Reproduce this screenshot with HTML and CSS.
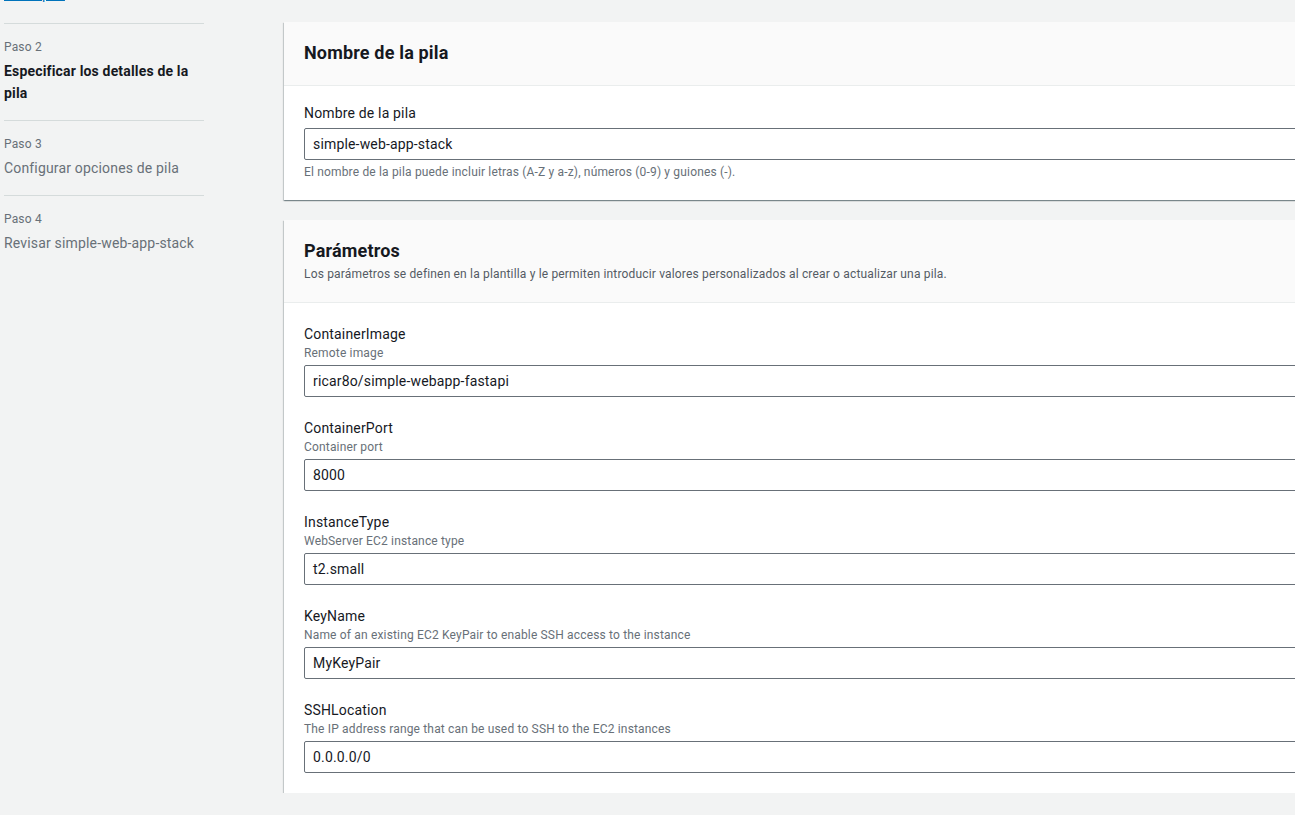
FILE: index.html
```html
<!DOCTYPE html>
<html lang="es">
<head>
<meta charset="utf-8">
<title>Crear pila</title>
<link rel="stylesheet" href="styles.css">
</head>
<body>
<div class="page">
  <nav class="wizard">
    <a class="crumb" href="#">Crear pila</a>
    <ul class="steps">
      <li class="step active">
        <span class="step-num">Paso 2</span>
        <span class="step-title">Especificar los detalles de la pila</span>
      </li>
      <li class="step">
        <span class="step-num">Paso 3</span>
        <span class="step-title">Configurar opciones de pila</span>
      </li>
      <li class="step">
        <span class="step-num">Paso 4</span>
        <span class="step-title">Revisar simple-web-app-stack</span>
      </li>
    </ul>
  </nav>
  <main class="content">
    <section class="card">
      <header class="card-header first">
        <h2>Nombre de la pila</h2>
      </header>
      <div class="card-body first">
        <div class="field">
          <label class="field-label">Nombre de la pila</label>
          <div class="input">simple-web-app-stack</div>
          <p class="hint">El nombre de la pila puede incluir letras (A-Z y a-z), números (0-9) y guiones (-).</p>
        </div>
      </div>
    </section>
    <section class="card">
      <header class="card-header">
        <h2>Parámetros</h2>
        <p class="card-desc">Los parámetros se definen en la plantilla y le permiten introducir valores personalizados al crear o actualizar una pila.</p>
      </header>
      <div class="card-body">
        <div class="field">
          <label class="field-label">ContainerImage</label>
          <span class="field-desc">Remote image</span>
          <div class="input">ricar8o/simple-webapp-fastapi</div>
        </div>
        <div class="field">
          <label class="field-label">ContainerPort</label>
          <span class="field-desc">Container port</span>
          <div class="input">8000</div>
        </div>
        <div class="field">
          <label class="field-label">InstanceType</label>
          <span class="field-desc">WebServer EC2 instance type</span>
          <div class="input">t2.small</div>
        </div>
        <div class="field">
          <label class="field-label">KeyName</label>
          <span class="field-desc">Name of an existing EC2 KeyPair to enable SSH access to the instance</span>
          <div class="input">MyKeyPair</div>
        </div>
        <div class="field">
          <label class="field-label">SSHLocation</label>
          <span class="field-desc">The IP address range that can be used to SSH to the EC2 instances</span>
          <div class="input">0.0.0.0/0</div>
        </div>
      </div>
    </section>
  </main>
</div>
</body>
</html>
```
FILE: styles.css
```css
* { box-sizing: border-box; }
html, body {
  margin: 0;
  background: #f2f3f3;
  font-family: Roboto, "Noto Sans", "Liberation Sans", sans-serif;
  color: #16191f;
  font-size: 14px;
  line-height: 22px;
  letter-spacing: 0.012em;
}
.page {
  display: flex;
  gap: 80px;
  padding-left: 4px;
  margin-top: -17px;
  overflow: hidden;
}
.wizard {
  width: 200px;
  flex: none;
}
.crumb {
  display: block;
  color: #0073bb;
  text-decoration: underline;
  font-size: 14px;
  line-height: 22px;
  height: 22px;
}
.steps {
  list-style: none;
  margin: 18px 0 0;
  padding: 0;
}
.step {
  border-top: 1px solid #d5dbdb;
  padding: 12px 0 16px;
  display: flex;
  flex-direction: column;
}
.step-num {
  font-size: 12px;
  line-height: 22px;
  color: #687078;
}
.step-title {
  color: #687078;
  font-size: 14px;
  line-height: 22px;
  margin-top: 2px;
}
.step.active .step-title {
  color: #16191f;
  font-weight: 700;
}
.content {
  flex: 1;
  min-width: 0;
  margin-right: -40px;
  padding-top: 39px;
  display: flex;
  flex-direction: column;
  gap: 20px;
}
.card {
  background: #fff;
  box-shadow: 0 1px 1px 0 rgba(0,28,36,.3), 1px 1px 1px 0 rgba(0,28,36,.15), -1px 1px 1px 0 rgba(0,28,36,.15);
}
.card-header {
  background: #fafafa;
  border-bottom: 1px solid #eaeded;
  padding: 20px;
}
.card-header.first {
  padding-bottom: 21px;
}
.card-header h2 {
  margin: 0;
  font-size: 18px;
  line-height: 22px;
  font-weight: 700;
  color: #16191f;
}
.card-desc {
  margin: 4px 0 0;
  font-size: 12px;
  line-height: 16px;
  color: #545b64;
}
.card-body {
  padding: 20px;
  display: flex;
  flex-direction: column;
  gap: 20px;
}
.card-body.first {
  padding-top: 16px;
}
.field {
  display: flex;
  flex-direction: column;
}
.field-label {
  font-size: 14px;
  line-height: 22px;
  color: #16191f;
}
.field-desc {
  font-size: 12px;
  line-height: 16px;
  color: #687078;
}
.input {
  margin-top: 4px;
  height: 32px;
  border: 1px solid #687078;
  border-radius: 2px;
  background: #fff;
  padding: 4px 8px;
  font-size: 14px;
  line-height: 22px;
  color: #16191f;
}
.hint {
  margin: 4px 0 0;
  font-size: 12px;
  line-height: 16px;
  color: #687078;
}
```
